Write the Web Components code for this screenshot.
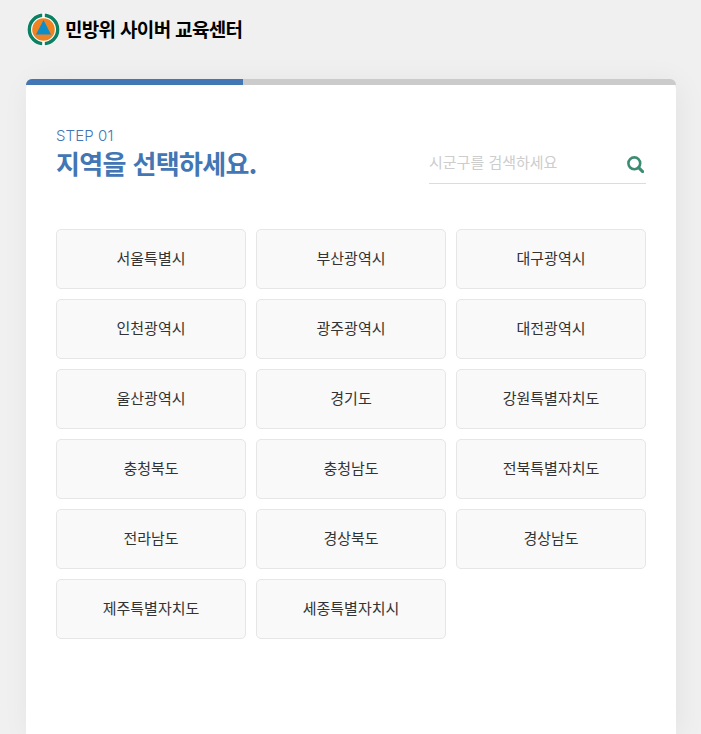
<!DOCTYPE html>
<html lang="ko">
<head>
<meta charset="utf-8">
<title>민방위 사이버 교육센터</title>
<style>
  html, body { margin: 0; height: 734px; overflow: hidden; background: #f0f0f0; }
  body { font-family: "Noto Sans CJK KR", "Noto Sans", sans-serif; }
</style>
</head>
<body>
<site-header>민방위 사이버 교육센터</site-header>
<step-card progress="33.3333">
  <step-title slot="title" step="STEP 01">지역을 선택하세요.</step-title>
  <search-box slot="search" placeholder="시군구를 검색하세요"></search-box>
  <region-grid>
    <region-button>서울특별시</region-button>
    <region-button>부산광역시</region-button>
    <region-button>대구광역시</region-button>
    <region-button>인천광역시</region-button>
    <region-button>광주광역시</region-button>
    <region-button>대전광역시</region-button>
    <region-button>울산광역시</region-button>
    <region-button>경기도</region-button>
    <region-button>강원특별자치도</region-button>
    <region-button>충청북도</region-button>
    <region-button>충청남도</region-button>
    <region-button>전북특별자치도</region-button>
    <region-button>전라남도</region-button>
    <region-button>경상북도</region-button>
    <region-button>경상남도</region-button>
    <region-button>제주특별자치도</region-button>
    <region-button>세종특별자치시</region-button>
  </region-grid>
</step-card>

<script>
// Header with the logo
class SiteHeader extends HTMLElement {
  constructor() {
    super();
    this.attachShadow({ mode: 'open' }).innerHTML = `
      <style>
        :host { display: flex; align-items: center; gap: 5px; height: 58px; padding-left: 27px; }
        svg { display: block; flex: none; }
        span { font-size: 19px; font-weight: 700; letter-spacing: -0.68px; color: #000; margin-bottom: 2px; }
      </style>
      <svg width="33" height="33" viewBox="0 0 33 33">
        <circle cx="16.5" cy="16.5" r="16.5" fill="#fff"/>
        <circle cx="16.5" cy="16.5" r="14.2" fill="none" stroke="#0b8062" stroke-width="3.4"/>
        <rect x="15.2" y="0" width="2.6" height="6" fill="#fff"/>
        <rect x="15.2" y="27" width="2.6" height="6" fill="#fff"/>
        <circle cx="16.5" cy="16.5" r="11.3" fill="#f08321"/>
        <polygon points="16.5,7 24,21.5 9,21.5" fill="#0d8ec9"/>
      </svg>
      <span><slot></slot></span>
    `;
  }
}

// White card with the step progress bar on top
class StepCard extends HTMLElement {
  constructor() {
    super();
    this.attachShadow({ mode: 'open' }).innerHTML = `
      <style>
        :host {
          display: block;
          width: 650px;
          height: 655px;
          margin: 21px 0 0 26px;
          background: #fff;
          border-radius: 10px 10px 0 0;
          box-shadow: 3px 3px 30px rgba(0, 0, 0, .06);
        }
        .track { height: 6px; background: #cbcbcb; border-radius: 10px 10px 0 0; overflow: hidden; }
        .fill { height: 100%; background: #4276b4; }
        .body { padding: 42px 30px 0; }
        .head { display: flex; justify-content: space-between; align-items: flex-end; margin-bottom: 47px; }
      </style>
      <div class="track"><div class="fill"></div></div>
      <div class="body">
        <div class="head"><slot name="title"></slot><slot name="search"></slot></div>
        <slot></slot>
      </div>
    `;
    this.shadowRoot.querySelector('.fill').style.width = this.getAttribute('progress') + '%';
  }
}

class StepTitle extends HTMLElement {
  constructor() {
    super();
    this.attachShadow({ mode: 'open' }).innerHTML = `
      <style>
        :host { display: block; color: #4276b4; }
        .step { font-family: Inter, "Noto Sans", sans-serif; font-size: 15px; font-weight: 300; line-height: 17px; letter-spacing: .1px; }
        h2 { margin: 0; font-size: 26px; font-weight: 700; line-height: 38px; letter-spacing: -0.65px; }
      </style>
      <div class="step"></div>
      <h2><slot></slot></h2>
    `;
    this.shadowRoot.querySelector('.step').textContent = this.getAttribute('step');
  }
}

class SearchBox extends HTMLElement {
  constructor() {
    super();
    this.attachShadow({ mode: 'open' }).innerHTML = `
      <style>
        :host { display: flex; align-items: center; justify-content: space-between; box-sizing: border-box;
          width: 217px; height: 39px; border-bottom: 1px solid #dcdcdc; margin-bottom: -2px; padding-right: 2px; }
        input { flex: 1; min-width: 0; border: 0; outline: 0; padding: 0; background: none;
          font: 400 15px "Noto Sans CJK KR", sans-serif; margin-top: -5px; }
        input::placeholder { color: #cdcdcd; opacity: 1; }
        svg { display: block; flex: none; margin-top: 1px; }
      </style>
      <input type="text">
      <svg width="17" height="17" viewBox="0 0 17 17" fill="none" stroke="#3c8c70">
        <circle cx="7.3" cy="7.3" r="5.9" stroke-width="2.6"/>
        <path d="M11.6 11.6 L15.6 15.6" stroke-width="3" stroke-linecap="round"/>
      </svg>
    `;
    this.shadowRoot.querySelector('input').placeholder = this.getAttribute('placeholder');
  }
}

class RegionGrid extends HTMLElement {
  constructor() {
    super();
    this.attachShadow({ mode: 'open' }).innerHTML = `
      <style>
        :host { display: grid; grid-template-columns: repeat(3, 190px); grid-auto-rows: 60px; gap: 10px; }
      </style>
      <slot></slot>
    `;
  }
}

class RegionButton extends HTMLElement {
  constructor() {
    super();
    this.attachShadow({ mode: 'open' }).innerHTML = `
      <style>
        :host { display: block; }
        button {
          display: block; width: 100%; height: 100%; padding: 0 0 3px; box-sizing: border-box;
          border: 1px solid #e6e6e6; border-radius: 5px; background: #f9f9f9; color: #333;
          font: 400 15px "Noto Sans CJK KR", sans-serif; cursor: pointer;
        }
      </style>
      <button type="button"><slot></slot></button>
    `;
  }
}

customElements.define('site-header', SiteHeader);
customElements.define('step-card', StepCard);
customElements.define('step-title', StepTitle);
customElements.define('search-box', SearchBox);
customElements.define('region-grid', RegionGrid);
customElements.define('region-button', RegionButton);
</script>
</body>
</html>
